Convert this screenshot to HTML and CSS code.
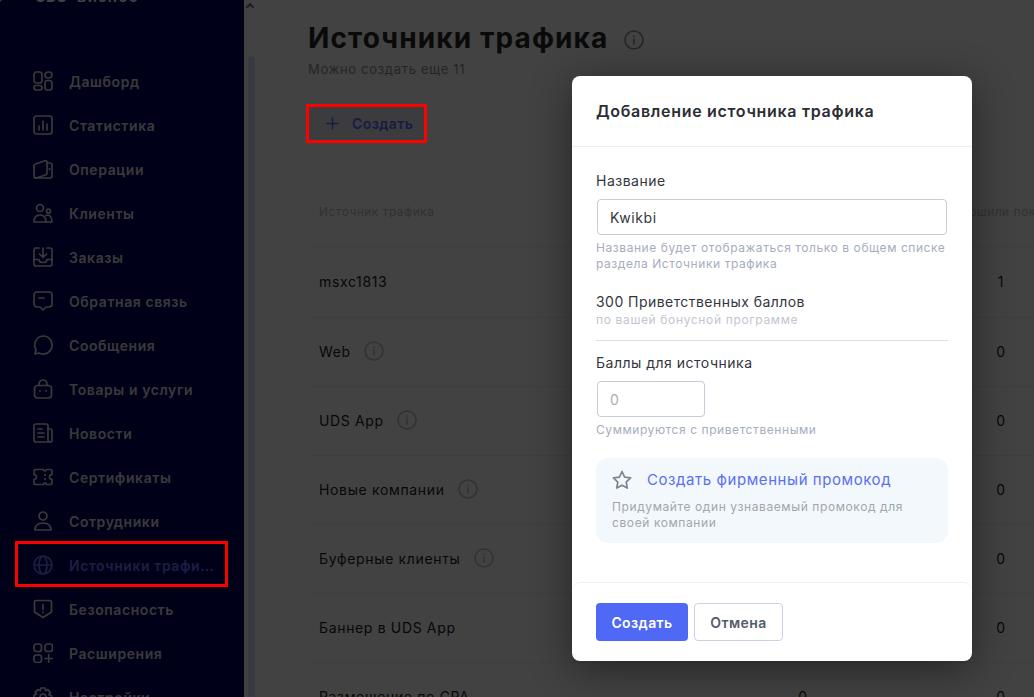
FILE: index.html
```html
<!DOCTYPE html>
<html lang="ru">
<head>
<meta charset="utf-8">
<title>Источники трафика</title>
<link rel="stylesheet" href="styles.css">
</head>
<body>
<div class="page">
  <aside class="sidebar">
    <div class="sidebar-inner">
      <div class="brand"><span class="brand-mark">UDS</span><span class="brand-name">Бизнес</span></div>
      <nav class="nav">
        <a class="nav-item"><svg class="nav-icon" viewBox="0 0 20 20"><rect x="1" y="1" width="8" height="11" rx="2.500"/><rect x="12" y="1" width="7" height="6" rx="3"/><rect x="1" y="14.500" width="8" height="4.500" rx="2.200"/><rect x="12" y="9.500" width="7" height="9.500" rx="2.500"/></svg><span class="nav-label">Дашборд</span></a>
        <a class="nav-item"><svg class="nav-icon" viewBox="0 0 20 20"><rect x="1" y="1" width="18" height="18" rx="2.500"/><path d="M6 11v4M10 6v9M14 9v6"/></svg><span class="nav-label">Статистика</span></a>
        <a class="nav-item"><svg class="nav-icon" viewBox="0 0 20 20"><path d="M1 7a2 2 0 0 1 1.500-2L12 1.700a1.500 1.500 0 0 1 2 1.500V14a2 2 0 0 1-1.500 2L3 19"/><path d="M14 4h3a2 2 0 0 1 2 2v11a2 2 0 0 1-2 2H3a2 2 0 0 1-2-2V7M16.500 9.500v1"/></svg><span class="nav-label">Операции</span></a>
        <a class="nav-item"><svg class="nav-icon" viewBox="0 0 20 20"><circle cx="7" cy="5" r="3.500"/><circle cx="15.500" cy="8" r="2"/><path d="M1 19c0-5 2.500-7 6-7s6 2 6 7Z"/><path d="M13 12.500c3.500-1.200 6 1 6 6.500h-6"/></svg><span class="nav-label">Клиенты</span></a>
        <a class="nav-item"><svg class="nav-icon" viewBox="0 0 20 20"><path d="M6 1H3a2 2 0 0 0-2 2v14a2 2 0 0 0 2 2h14a2 2 0 0 0 2-2V3a2 2 0 0 0-2-2h-3"/><path d="M10 1v9.500M6.500 7l3.500 3.500L13.500 7M1 12.500h5c0 2 2 3 4 3s4-1 4-3h5"/></svg><span class="nav-label">Заказы</span></a>
        <a class="nav-item"><svg class="nav-icon" viewBox="0 0 20 20"><path d="M4 1h12a3 3 0 0 1 3 3v9a3 3 0 0 1-3 3h-3l-3 3-3-3H4a3 3 0 0 1-3-3V4a3 3 0 0 1 3-3Z"/><path d="M6 7h5"/></svg><span class="nav-label">Обратная связь</span></a>
        <a class="nav-item"><svg class="nav-icon" viewBox="0 0 20 20"><path d="M10 1a9 9 0 1 1-4 17l-4 1 1-4.500A9 9 0 0 1 10 1Z"/></svg><span class="nav-label">Сообщения</span></a>
        <a class="nav-item"><svg class="nav-icon" viewBox="0 0 20 20"><rect x="1.500" y="6.500" width="17" height="12.500" rx="3"/><path d="M6 6.500V5a4 4 0 0 1 8 0v1.500M7 11.500v.5M13 11.500v.5"/></svg><span class="nav-label">Товары и услуги</span></a>
        <a class="nav-item"><svg class="nav-icon" viewBox="0 0 20 20"><path d="M3 19a2 2 0 0 1-2-2V3a2 2 0 0 1 2-2h10a2 2 0 0 1 2 2v14a2 2 0 0 0 2 2H3Z"/><path d="M15 6h2a2 2 0 0 1 2 2v9a2 2 0 0 1-2 2M5 6h4M5 10h6M5 14h6"/></svg><span class="nav-label">Новости</span></a>
        <a class="nav-item"><svg class="nav-icon" viewBox="0 0 20 20"><path d="M3 2.500h7.500a1.500 1.500 0 0 0 3 0H17a2 2 0 0 1 2 2v3a2.500 2.500 0 0 0 0 5v3a2 2 0 0 1-2 2h-3.500a1.500 1.500 0 0 0-3 0H3a2 2 0 0 1-2-2v-3a2.500 2.500 0 0 0 0-5v-3a2 2 0 0 1 2-2Z"/><path d="M12 7.500v1M12 11.500v1"/></svg><span class="nav-label">Сертификаты</span></a>
        <a class="nav-item"><svg class="nav-icon" viewBox="0 0 20 20"><circle cx="10" cy="5" r="4"/><path d="M2 19c0-5 3-7 8-7s8 2 8 7Z"/></svg><span class="nav-label">Сотрудники</span></a>
        <a class="nav-item nav-item-active"><svg class="nav-icon" viewBox="0 0 20 20"><circle cx="10" cy="10" r="9"/><ellipse cx="10" cy="10" rx="4" ry="9"/><path d="M1 10h18"/></svg><span class="nav-label">Источники трафика</span></a>
        <a class="nav-item"><svg class="nav-icon" viewBox="0 0 20 20"><path d="M3 1.500h14a1.500 1.500 0 0 1 1.500 1.500v10L10 18.500 1.500 13V3A1.500 1.500 0 0 1 3 1.500Z"/><path d="M10 5.500v5M10 13v.5"/></svg><span class="nav-label">Безопасность</span></a>
        <a class="nav-item"><svg class="nav-icon" viewBox="0 0 20 20"><rect x="1" y="1" width="7.500" height="7.500" rx="2.500"/><rect x="12" y="1" width="7.500" height="7.500" rx="2.500"/><rect x="1" y="12" width="7.500" height="7.500" rx="2.500"/><path d="M15.700 11.500V19.500M12 15.500h7.500"/></svg><span class="nav-label">Расширения</span></a>
        <a class="nav-item"><svg class="nav-icon" viewBox="0 0 20 20"><circle cx="10" cy="10" r="3"/><path d="M8 1h4l.6 2.600 2.300-1 2.500 3-1.500 2.200 2.600 1v4l-2.600.7 1 2.500-3 2.500-2-1.500-1 2.500H8l-.7-2.500-2.200 1-3-2.500 1.200-2.300L1 12V8l2.300-.7-1-2.300 3-2.500 2 1Z"/></svg><span class="nav-label">Настройки</span></a>
      </nav>
    </div>
  </aside>
  <div class="scrollbar"><span class="scroll-arrow"></span><span class="scroll-thumb"></span></div>
  <main class="main">
    <div class="title-row">
      <h1 class="title">Источники трафика</h1>
      <svg class="info info-large" viewBox="0 0 20 20"><circle cx="10" cy="10" r="9"/><path d="M10 9v5M10 6v.6"/></svg>
    </div>
    <p class="subtitle">Можно создать еще 11</p>
    <button class="create"><svg class="create-plus" viewBox="0 0 14 14"><path d="M7 1v12M1 7h12"/></svg>Создать</button>
    <div class="table">
      <div class="row row-head"><span>Источник трафика</span><span class="num"></span><span class="num">Совершили покупку</span></div>
      <div class="row row-first"><span class="cell-name">msxc1813</span><span class="num"></span><span class="num">1</span></div>
      <div class="row"><span class="cell-name">Web<svg class="info" viewBox="0 0 20 20"><circle cx="10" cy="10" r="9"/><path d="M10 9v5M10 6v.6"/></svg></span><span class="num"></span><span class="num">0</span></div>
      <div class="row"><span class="cell-name">UDS App<svg class="info" viewBox="0 0 20 20"><circle cx="10" cy="10" r="9"/><path d="M10 9v5M10 6v.6"/></svg></span><span class="num"></span><span class="num">0</span></div>
      <div class="row"><span class="cell-name">Новые компании<svg class="info" viewBox="0 0 20 20"><circle cx="10" cy="10" r="9"/><path d="M10 9v5M10 6v.6"/></svg></span><span class="num"></span><span class="num">0</span></div>
      <div class="row"><span class="cell-name">Буферные клиенты<svg class="info" viewBox="0 0 20 20"><circle cx="10" cy="10" r="9"/><path d="M10 9v5M10 6v.6"/></svg></span><span class="num"></span><span class="num">0</span></div>
      <div class="row"><span class="cell-name">Баннер в UDS App</span><span class="num"></span><span class="num">0</span></div>
      <div class="row"><span class="cell-name">Размещение по CPA</span><span class="num">0</span><span class="num">0</span></div>
    </div>
  </main>
</div>

<div class="scrim"></div>

<section class="modal">
  <header class="modal-head"><h2 class="modal-title">Добавление источника трафика</h2></header>
  <div class="modal-body">
    <label class="label">Название</label>
    <div class="field field-wide">Kwikbi</div>
    <p class="hint hint-name">Название будет отображаться только в общем списке раздела Источники трафика</p>
    <p class="points">300 Приветственных баллов</p>
    <p class="points-note">по вашей бонусной программе</p>
    <hr class="rule">
    <label class="label">Баллы для источника</label>
    <div class="field field-short">0</div>
    <p class="hint hint-sum">Суммируются с приветственными</p>
    <div class="promo">
      <div class="promo-top">
        <svg class="promo-star" viewBox="0 0 20 20"><path d="M10 1.500l2.600 5.600 6 .8-4.400 4.200 1.100 6L10 15.200 4.700 18.100l1.100-6L1.400 7.900l6-.8Z"/></svg>
        <span class="promo-link">Создать фирменный промокод</span>
      </div>
      <p class="promo-text">Придумайте один узнаваемый промокод для своей компании</p>
    </div>
  </div>
  <footer class="modal-foot">
    <button class="btn btn-primary">Создать</button>
    <button class="btn btn-ghost">Отмена</button>
  </footer>
</section>

<div class="mark mark-nav"></div>
<div class="mark mark-create"></div>
</body>
</html>
```

FILE: styles.css
```css
* { box-sizing: border-box; }
html, body { margin: 0; height: 100%; }
body {
  position: relative;
  width: 1034px;
  height: 697px;
  overflow: hidden;
  font-family: "Inter", "Liberation Sans", sans-serif;
  background: #fff;
}
.page { display: flex; width: 1034px; height: 697px; overflow: hidden; }

.sidebar { flex: 0 0 244px; background: #00005c; overflow: hidden; color: #dcdcdc; border-top-left-radius: 3px; }
.sidebar-inner { margin-top: -16px; }
.brand { display: flex; align-items: center; gap: 10px; height: 24px; padding-left: 35px; color: #fff; font-weight: 700; font-size: 15px; }
.brand-name { font-weight: 600; letter-spacing: 1.5px; }
.nav { display: flex; flex-direction: column; padding-top: 51px; }
.nav-item { display: flex; align-items: center; gap: 16px; height: 44px; padding-left: 33px; font-size: 14px; font-weight: 600; letter-spacing: .57px; }
.nav-icon { flex: 0 0 20px; width: 20px; height: 20px; fill: none; stroke: currentColor; stroke-width: 1.7; stroke-linecap: round; stroke-linejoin: round; }
.nav-label { max-width: 146px; white-space: nowrap; overflow: hidden; text-overflow: ellipsis; }
.nav-item-active { color: #6a78ff; }

.scrollbar { position: relative; flex: 0 0 12px; background: #fff; }
.scroll-arrow { position: absolute; left: 3px; top: 4px; width: 6px; height: 6px; border-left: 2px solid #7a7a7a; border-top: 2px solid #7a7a7a; transform: rotate(45deg); }
.scroll-thumb { position: absolute; left: 4px; right: 1px; top: 56px; bottom: 0; background: #d5e5f5; border-radius: 4px 4px 0 0; }

.main { flex: 1 1 auto; min-width: 0; padding: 19px 0 0 52px; background: #fff; overflow: hidden; }
.title-row { display: flex; align-items: center; gap: 16px; height: 38px; }
.title { margin: 0; font-size: 28px; line-height: 38px; font-weight: 700; letter-spacing: 1.1px; color: #2a2a2a; white-space: nowrap; }
.info { flex: none; width: 20px; height: 20px; fill: none; stroke: #c0c0c0; stroke-width: 1.6; stroke-linecap: round; margin-left: 13px; }
.info-large { margin: 3px 0 0; stroke: #909090; }
.subtitle { margin: 3px 0 0; font-size: 13px; line-height: 18px; letter-spacing: .7px; color: #909090; }
.create { display: flex; align-items: center; gap: 13px; height: 33px; width: 115px; margin: 29px 0 0 1px; padding: 0 0 0 17px; border: 0; background: #e6e8f2; color: #5a6cff; font: 600 14px "Inter", sans-serif; letter-spacing: .4px; }
.create-plus { width: 13px; height: 13px; fill: none; stroke: currentColor; stroke-width: 1.6; stroke-linecap: round; }

.table { margin-top: 64px; width: 791px; }
.row { display: grid; grid-template-columns: 395px 200px 196px; align-items: center; height: 69px; padding-bottom: 2px; border-top: 1px solid #ededed; font-size: 14px; letter-spacing: .65px; color: #222; }
.row > span:first-child { padding-left: 11px; }
.row-first { height: 71px; }
.row-head { height: 42px; padding-bottom: 0; align-items: start; border-top: 0; font-size: 12px; letter-spacing: .45px; color: #bdbdbd; line-height: 16px; }
.cell-name { display: flex; align-items: center; }
.num { text-align: center; white-space: nowrap; }

.scrim { position: absolute; inset: 0; background: rgba(0, 0, 0, .74); }

.modal {
  position: absolute;
  left: 572px; top: 76px;
  width: 400px; height: 585px;
  background: #fff;
  border-radius: 8px;
  box-shadow: 0 8px 40px rgba(0, 0, 0, .45);
  display: flex; flex-direction: column;
}
.modal-head { flex: 0 0 71px; padding: 0 24px; display: flex; align-items: center; border-bottom: 1px solid #ebeef5; }
.modal-title { margin: 0; font-size: 16px; font-weight: 600; letter-spacing: .69px; color: #2b2d33; white-space: nowrap; }
.modal-body { flex: 1 1 auto; padding: 25px 24px 0; }
.label { display: block; font-size: 14px; line-height: 18px; letter-spacing: .5px; color: #33363d; }
.field { display: flex; align-items: center; height: 36px; margin: 9px 0 0 1px; padding: 0 12px; border: 1px solid #c6ccdc; border-radius: 4px; font-size: 14px; letter-spacing: .6px; color: #33363d; }
.field-wide { width: 350px; }
.field-short { width: 108px; color: #a8adb8; }
.hint { margin: 0; font-size: 12px; line-height: 16px; letter-spacing: .57px; color: #a6adbd; }
.hint-name { margin-top: 5px; }
.hint-sum { margin-top: 5px; }
.points { margin: 21px 0 0; font-size: 14px; line-height: 18px; letter-spacing: .45px; color: #33363d; }
.points-note { margin: 1px 0 0; font-size: 12px; line-height: 16px; letter-spacing: .65px; color: #c2c6d0; }
.rule { margin: 12px 0 13px; border: 0; border-top: 1px solid #dde0e4; }
.promo { margin-top: 20px; height: 85px; padding: 11px 16px 0; background: #f3f8fc; border-radius: 12px; }
.promo-top { display: flex; align-items: center; gap: 15px; height: 22px; }
.promo-star { flex: none; width: 20px; height: 20px; fill: none; stroke: #7d8493; stroke-width: 1.700; stroke-linejoin: round; }
.promo-link { margin-bottom: 2px; font-size: 15px; letter-spacing: .57px; color: #5a70f0; white-space: nowrap; }
.promo-text { margin: 8px 0 0; font-size: 12px; line-height: 16px; letter-spacing: .6px; color: #a2a6ae; }
.modal-foot { flex: 0 0 79px; display: flex; align-items: flex-start; gap: 6px; padding: 20px 24px 0; border-top: 1px solid #eef0f4; border-radius: 8px; }
.btn { height: 38px; border-radius: 4px; font: 600 14px "Inter", sans-serif; letter-spacing: .4px; }
.btn-primary { width: 92px; border: 0; background: #4f68f5; color: #fff; }
.btn-ghost { width: 89px; background: #fff; border: 1px solid #ccd2e2; color: #555c6b; }

.mark { position: absolute; border: 3px solid #f00; border-radius: 1px; }
.mark-nav { left: 15px; top: 541px; width: 213px; height: 46px; }
.mark-create { left: 306px; top: 104px; width: 121px; height: 39px; }
```
